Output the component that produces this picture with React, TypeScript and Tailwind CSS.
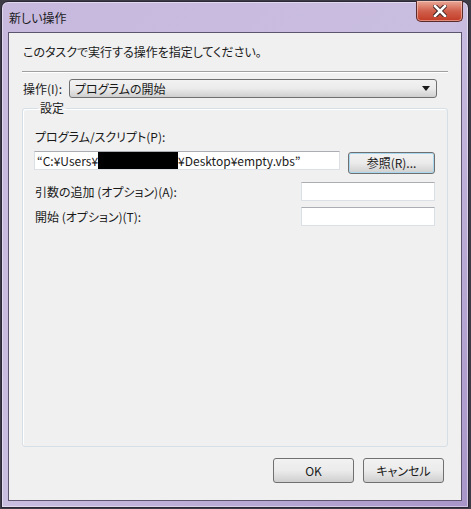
import React from 'react';

const font = "font-['MS_UI_Gothic','Noto_Sans_CJK_JP',sans-serif] [font-feature-settings:'palt']";

const btn =
  'rounded-[3px] border border-[#707070] bg-gradient-to-b from-[#f2f2f2] via-[#ebebeb] via-50% to-[#cfcfcf] text-[12px] text-[#1a1a1a] flex items-center justify-center';

const field = 'h-[19px] border border-[#dbdfe6] border-t-[#abadb3] bg-white';

const App = () => {
  return (
    <div className={`w-[471px] h-[509px] bg-[#3d3b45] ${font}`}>
      <div className="ml-[1px] pt-[1px] w-[468px] h-[508px]">
        <div className="h-full flex flex-col rounded-t-[7px] border border-[#2b2736] bg-gradient-to-br from-[#c7b9de] via-[#c9bde0] to-[#a996c9] shadow-[inset_0_0_0_1px_rgba(255,255,255,0.45)]">
          {/* title bar */}
          <div className="h-[30px] flex items-start justify-between pl-[7px]">
            <span className="mt-[9px] text-[12px] leading-[14px] text-[#1b1a22]">新しい操作</span>
            <div className="mr-[5px] -mt-[1px] w-[47px] h-[21px] rounded-b-[5px] border border-[#5b2a2a] border-t-0 bg-gradient-to-b from-[#e8a898] via-[#d0604c] via-50% to-[#c23a24] flex items-center justify-center shadow-[inset_0_0_0_1px_rgba(255,220,210,0.5)]">
              <svg width="14" height="12" viewBox="0 0 14 12">
                <path d="M2 1 L12 11 M12 1 L2 11" stroke="#3a2020" strokeWidth="4.5" strokeLinecap="square" />
                <path d="M2 1 L12 11 M12 1 L2 11" stroke="#ffffff" strokeWidth="2.6" strokeLinecap="square" />
              </svg>
            </div>
          </div>

          {/* client */}
          <div className="mx-[6px] mb-[6px] flex-1 border border-[#5d5570] bg-[#f0f0f0] flex flex-col px-[13px] text-[12px] leading-[14px] text-[#1a1a1a]">
            <p className="mt-[12px] pl-[1px]">このタスクで実行する操作を指定してください。</p>
            <div className="mt-[12px] border-t border-[#a0a0a0] border-b border-b-white" />

            <div className="mt-[6px] flex items-center gap-[7px] pl-[1px]">
              <span>操作(I):</span>
              <div className={`${btn} w-[368px] h-[19px] !justify-between pl-[5px] pr-[6px]`}>
                <span>プログラムの開始</span>
                <svg width="8" height="5" viewBox="0 0 8 5">
                  <path d="M0 0 H8 L4 5 Z" fill="#1a1a1a" />
                </svg>
              </div>
            </div>

            <fieldset className="mt-[3px] h-[346px] rounded-[3px] border border-[#d5dfe5] shadow-[inset_1px_1px_0_#fff] px-[11px]">
              <legend className="ml-[4px] px-[2px]">設定</legend>

              <p className="mt-[15px] pl-[1px]">プログラム/スクリプト(P):</p>
              <div className="mt-[7px] flex items-start gap-[8px]">
                <div className={`${field} w-[306px] flex items-center pl-[2px] overflow-hidden`}>
                  <span>“C:¥Users¥</span>
                  <span className="inline-block w-[80px] h-[19px] bg-black" />
                  <span>¥Desktop¥empty.vbs”</span>
                </div>
                <div className={`${btn} w-[87px] h-[22px] mt-[1px] border-[#3c7fb1] shadow-[inset_0_0_0_1px_#a8d8f0]`}>参照(R)...</div>
              </div>

              <div className="mt-[8px] flex items-center justify-between">
                <span className="pl-[1px]">引数の追加 (オプション)(A):</span>
                <div className={`${field} w-[134px] mr-[1px]`} />
              </div>
              <div className="mt-[6px] flex items-center justify-between">
                <span className="pl-[1px]">開始 (オプション)(T):</span>
                <div className={`${field} w-[134px] mr-[1px]`} />
              </div>
            </fieldset>

            <div className="mt-auto mb-[17px] flex justify-end gap-[9px] mr-[4px]">
              <div className={`${btn} w-[81px] h-[25px]`}>OK</div>
              <div className={`${btn} w-[81px] h-[25px]`}>キャンセル</div>
            </div>
          </div>
        </div>
      </div>
    </div>
  );
};

export default App;
